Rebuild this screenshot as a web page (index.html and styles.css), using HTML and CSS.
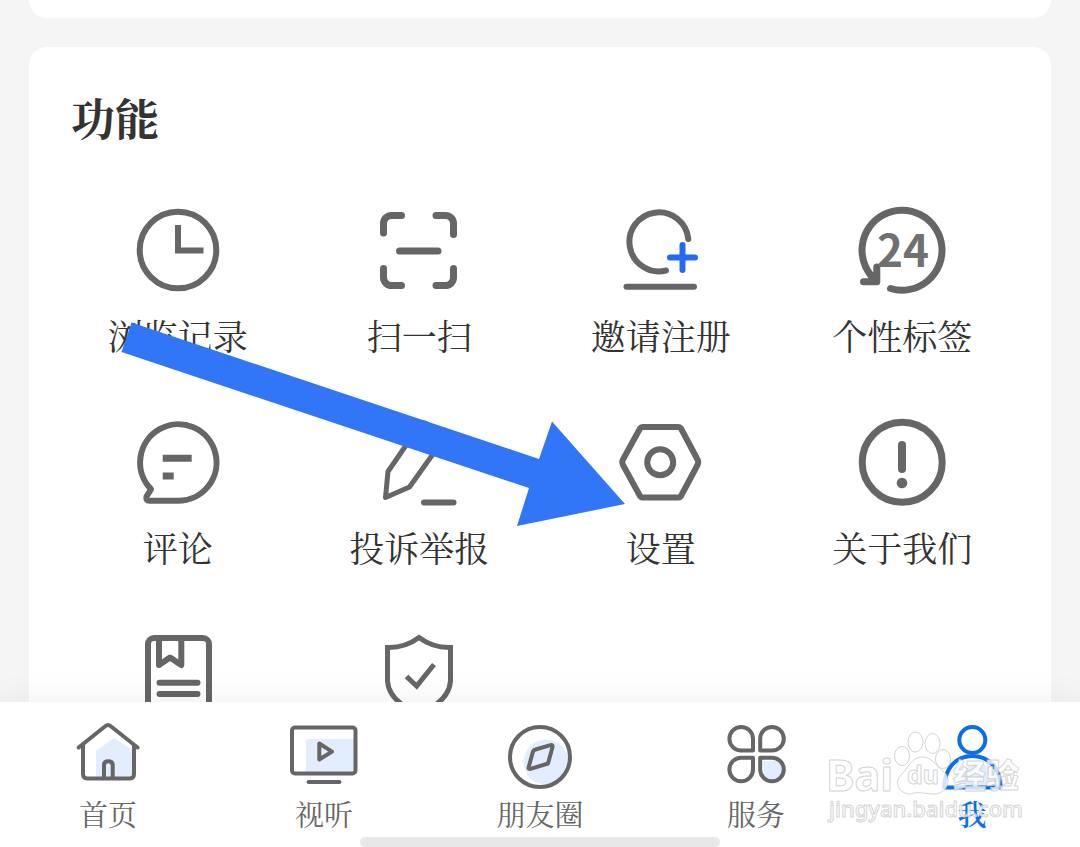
FILE: index.html
```html
<!DOCTYPE html>
<html lang="zh-CN">
<head>
<meta charset="utf-8">
<meta name="viewport" content="width=device-width, initial-scale=1">
<title>我</title>
<link rel="stylesheet" href="styles.css">
</head>
<body class="screen">
<main class="content">
  <section class="card card-previous"></section>
  <section class="card">
    <h2 class="card-title">功能</h2>
    <div class="features">
      <button class="feature" type="button">
        <svg class="feature-icon" viewBox="0 0 96 96" aria-hidden="true"><circle cx="48" cy="48" r="38.3"/><path class="butt" d="M48 23v25.5h25.5"/></svg>
        <span class="feature-label">浏览记录</span>
      </button>
      <button class="feature" type="button">
        <svg class="feature-icon medium" viewBox="0 0 96 96" aria-hidden="true"><path d="M12.5 31V21.5a8 8 0 0 1 8-8H30.5M65 13.5h9.5a8 8 0 0 1 8 8V32.5M12.5 66.5V75.5a8 8 0 0 0 8 8H30.5M65 83.5h9.5a8 8 0 0 0 8-8V66.5M28.5 49H67"/></svg>
        <span class="feature-label">扫一扫</span>
      </button>
      <button class="feature" type="button">
        <svg class="feature-icon" viewBox="0 0 96 96" aria-hidden="true"><path d="M75.3 37A29.5 29.5 0 1 0 53 68.5M13.5 84.7H81"/><path class="accent" d="M57 55.5H82M69.5 43V68"/></svg>
        <span class="feature-label">邀请注册</span>
      </button>
      <button class="feature" type="button">
        <svg class="feature-icon medium" viewBox="0 0 96 96" aria-hidden="true"><path d="M36.5 86.5A40 40 0 1 0 22.5 79M9.5 79.8H22.8V65M22 79L19 75"/><text class="icon-number" x="49" y="65">24</text></svg>
        <span class="feature-label">个性标签</span>
      </button>
      <button class="feature" type="button">
        <svg class="feature-icon" viewBox="0 0 96 96" aria-hidden="true"><path d="M48 86.7A38.2 38.2 0 1 0 21 75.2L16.5 82.5Q15.5 86.7 19.5 86.7Z"/><path class="butt wide" d="M32.7 44.2H61.7M32.7 62H43.7"/></svg>
        <span class="feature-label">评论</span>
      </button>
      <button class="feature" type="button">
        <svg class="feature-icon thin" viewBox="0 0 96 96" aria-hidden="true"><path d="M14.5 83.5L17 57.5L49 11Q52 7.5 56 10L71 20Q74 23 72 26L38.5 73Z"/><path class="base" d="M53 88.5H82.5"/></svg>
        <span class="feature-label">投诉举报</span>
      </button>
      <button class="feature" type="button">
        <svg class="feature-icon" viewBox="0 0 96 96" aria-hidden="true"><path d="M29.5 13H65.5Q67 13 68 14.5L84.5 45.5Q86 48.3 84.5 51L68 82Q67 83.5 65.5 83.5H29.5Q28 83.5 27 82L10 51Q8.5 48.3 10 45.5L27 14.5Q28 13 29.5 13Z"/><circle cx="47.2" cy="48.2" r="13"/></svg>
        <span class="feature-label">设置</span>
      </button>
      <button class="feature" type="button">
        <svg class="feature-icon medium" viewBox="0 0 96 96" aria-hidden="true"><circle cx="48.2" cy="48.2" r="40"/><path class="heavy" d="M48 31V55"/><circle class="dot" cx="48" cy="69" r="5.3"/></svg>
        <span class="feature-label">关于我们</span>
      </button>
      <button class="feature" type="button">
        <svg class="feature-icon" viewBox="0 0 96 96" aria-hidden="true"><rect x="18" y="12" width="61" height="75" rx="6"/><path d="M29 12V39L40 31.5L51.3 39V12M29.5 56.7H67.5M29.5 68H67.5"/></svg>
      </button>
      <button class="feature" type="button">
        <svg class="feature-icon thin" viewBox="0 0 96 96" aria-hidden="true"><path class="butt" d="M48 11.5Q34 22 16.5 21.5V55Q18 76 48 87Q78 76 79.5 55V21.5Q62 22 48 11.5Z"/><path class="butt" d="M35.5 50.5L45.7 60L63 38.5"/></svg>
      </button>
    </div>
  </section>
</main>
<nav class="tabbar">
  <div class="tabs">
    <a class="tab" href="#home">
      <svg class="tab-icon" viewBox="0 0 72 72" aria-hidden="true"><path class="tint" d="M42 18L24 31V58H62V31Z"/><path d="M6.7 27.5L33.5 6Q36 4 38.5 6L65.5 27.5M11 25V54Q11 58.5 15.5 58.5H57.5Q62 58.5 62 54V25M32 58V45Q32 41.3 36.3 41.3Q40.7 41.3 40.7 45V58"/></svg>
      <span>首页</span>
    </a>
    <a class="tab" href="#video">
      <svg class="tab-icon" viewBox="0 0 72 72" aria-hidden="true"><path class="tint" d="M20 19H67V53H18V21Q18 19 20 19Z"/><rect x="4" y="7.5" width="63.5" height="46" rx="3"/><path d="M31.3 23.5V39.5L44 31.6ZM20.5 62H51.5"/></svg>
      <span>视听</span>
    </a>
    <a class="tab" href="#moments">
      <svg class="tab-icon" viewBox="0 0 72 72" aria-hidden="true"><circle class="tint" cx="42" cy="42" r="22.5"/><circle cx="36" cy="37" r="30"/><path d="M31.5 29.5L46.5 25.2Q49 24.7 48.5 27L44 43.5L26.5 48.8Q24 49.5 24.7 47L29 31.5Q29.5 30 31.5 29.5Z"/></svg>
      <span>朋友圈</span>
    </a>
    <a class="tab" href="#services">
      <svg class="tab-icon" viewBox="0 0 72 72" aria-hidden="true"><path class="tint" d="M43 41H63V54L54 63L44 56Z"/><path d="M33 30.6H21.2A11.8 11.8 0 1 1 33 18.8ZM40.2 30.6H52A11.8 11.8 0 1 0 40.2 18.8ZM33 37.7H21.2A11.8 11.8 0 1 0 33 49.5ZM40.2 37.7H52A11.8 11.8 0 1 1 40.2 49.5Z"/></svg>
      <span>服务</span>
    </a>
    <a class="tab active" href="#me" aria-current="page">
      <svg class="tab-icon" viewBox="0 0 72 72" aria-hidden="true"><path class="tint" d="M22 67C22 51 33 44 44 44S62 54 64 67Z"/><circle cx="36.3" cy="20" r="13"/><path d="M8 67.5C9 48 20 36 36.3 36S64 48 65 67.5Z"/></svg>
      <span>我</span>
    </a>
  </div>
  <div class="home-indicator"></div>
</nav>
<svg class="arrow" viewBox="0 0 504 205" aria-hidden="true"><path d="M10.5 1.5L418 138L431 100.5L504 183L396 205L408 167L.5 31Z"/></svg>
<svg class="watermark" viewBox="0 0 200 100" role="img" aria-label="Baidu 经验">
  <ellipse cx="77" cy="28" rx="7.5" ry="9.5"/><ellipse cx="90.5" cy="14" rx="7.5" ry="10"/><ellipse cx="107.5" cy="15.5" rx="7.5" ry="10"/><ellipse cx="118" cy="31" rx="7.5" ry="9.5"/>
  <path d="M97 29C107 29 110 37 118 43C128 51 122 66 109 66C102 66 92 63 86 66C73 66 69 54 76 47C83 40 87 29 97 29Z"/>
  <text class="mark-latin" x="1" y="63">Bai</text>
  <text class="mark-du" x="82" y="56">du</text>
  <text class="mark-cjk" x="128" y="60">经验</text>
  <text class="mark-url" x="4" y="89">jingyan.baidu.com</text>
</svg>
</body>
</html>
```

FILE: styles.css
```css
* { box-sizing: border-box; }

.screen {
  position: relative;
  display: flex;
  flex-direction: column;
  height: 100vh;
  margin: 0;
  overflow: hidden;
  background: #f5f5f5;
  color: #333;
  font-family: "Noto Serif CJK SC", "Noto Serif SC", "Source Han Serif SC", "Noto Sans CJK SC", serif;
}

.content {
  display: flex;
  flex: 1;
  flex-direction: column;
  gap: 29px;
  min-height: 0;
  padding: 0 29px;
  overflow: hidden;
}

.card {
  flex: none;
  padding: 44px 28px;
  border-radius: 18px;
  background: #fff;
}

.card-previous {
  padding: 18px 0 0;
  border-radius: 0 0 18px 18px;
}

.card-title {
  margin: 0 0 59px;
  padding-left: 14px;
  font-size: 44px;
  font-weight: 700;
  line-height: 52px;
}

.features {
  display: grid;
  grid-template-columns: repeat(4, 1fr);
  row-gap: 56px;
}

.feature {
  display: flex;
  flex-direction: column;
  align-items: center;
  gap: 14px;
  padding: 0;
  border: 0;
  background: none;
  color: inherit;
  font: inherit;
}

.feature-icon {
  width: 96px;
  height: 96px;
  fill: none;
  stroke: #666;
  stroke-width: 6;
  stroke-linecap: round;
  stroke-linejoin: round;
}

.feature-icon.medium { stroke-width: 7; }
.feature-icon.thin { stroke-width: 5; }
.feature-icon .butt { stroke-linecap: butt; stroke-linejoin: miter; }
.feature-icon .base { stroke-width: 6; }
.feature-icon .wide { stroke-width: 7; }
.feature-icon .heavy { stroke-width: 8; }
.feature-icon .accent { stroke: #2468f8; }
.feature-icon .dot { fill: #666; stroke: none; }

.icon-number {
  fill: #707070;
  stroke: none;
  font-family: "Noto Sans CJK SC", sans-serif;
  font-size: 44px;
  font-weight: 700;
  text-anchor: middle;
}

.feature-label {
  font-size: 35px;
  line-height: 46px;
  white-space: nowrap;
}

.tabbar {
  position: relative;
  display: flex;
  flex: none;
  flex-direction: column;
  align-items: center;
  gap: 5px;
  padding-top: 18px;
  background: #fff;
  box-shadow: 0 -6px 28px rgba(0, 0, 0, 0.05);
}

.tabs {
  display: grid;
  grid-template-columns: repeat(5, 1fr);
  width: 100%;
}

.tab {
  display: flex;
  flex-direction: column;
  align-items: center;
  gap: 4px;
  color: #666;
  font-size: 29px;
  line-height: 36px;
  text-decoration: none;
}

.tab.active { color: #0b6fe8; font-weight: 600; }

.tab-icon {
  width: 72px;
  height: 72px;
  fill: none;
  stroke: currentColor;
  stroke-width: 4;
  stroke-linecap: round;
  stroke-linejoin: round;
}

.tab-icon .tint { fill: #e2eefd; stroke: none; }

.home-indicator {
  width: 33.333%;
  height: 10px;
  border-radius: 5px;
  background: #e8e8e8;
}

/* Annotation arrow laid over the page */
.arrow {
  position: absolute;
  top: 321px;
  left: 121px;
  width: 504px;
  height: 205px;
  fill: #3076f6;
  pointer-events: none;
}

.watermark {
  position: absolute;
  right: 55px;
  bottom: 19px;
  width: 200px;
  height: 100px;
  overflow: visible;
  fill: rgba(255, 255, 255, 0.8);
  stroke: rgba(200, 200, 200, 0.8);
  stroke-width: 1;
  font-family: "Noto Sans", "Noto Sans CJK SC", sans-serif;
  pointer-events: none;
}

.mark-latin { font-size: 43px; font-weight: 700; }
.mark-du { font-size: 25px; font-weight: 700; }
.mark-cjk { font-family: "Noto Sans CJK SC", sans-serif; font-size: 33px; font-weight: 900; }
.mark-url { font-size: 22px; font-weight: 500; }
```
